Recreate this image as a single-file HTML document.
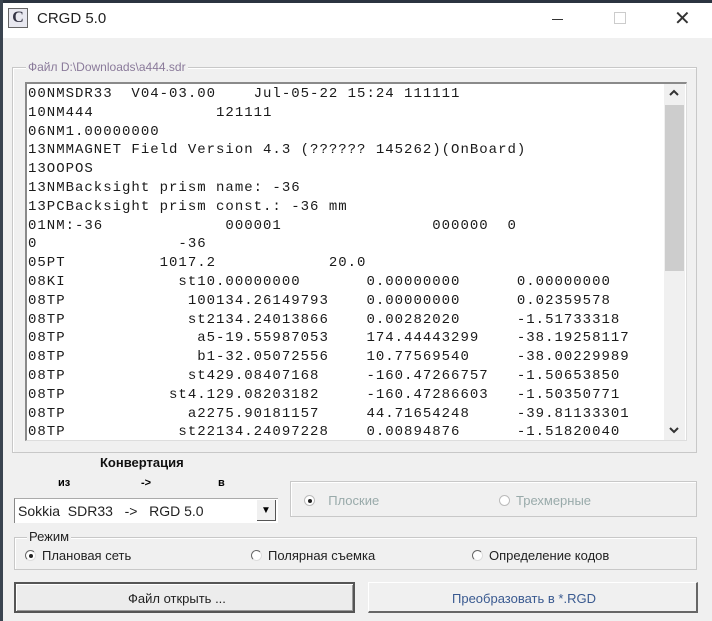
<!DOCTYPE html>
<html><head><meta charset="utf-8"><style>
*{margin:0;padding:0;box-sizing:border-box}
body{width:712px;height:621px;overflow:hidden;background:#f0f0f0;font-family:"Liberation Sans","DejaVu Sans",sans-serif;position:relative}
.abs{position:absolute}
.title{left:0;top:0;width:712px;height:38px;background:#fff;border-top:3px solid #2b3440}
.lb{left:0;top:0;width:3px;height:621px;background:#3a4450}
.txt{left:25px;top:82px;width:662px;height:359px;background:#fff;border-top:2px solid #8a8a8a;border-left:2px solid #8a8a8a;border-right:1px solid #ddd;border-bottom:1px solid #ddd;overflow:hidden}
pre{font-family:"Liberation Mono",monospace;font-size:14px;letter-spacing:1.0px;line-height:18.8px;color:#1a1a1a;margin:1px 0 0 1px;font-weight:normal}
.grp{border:1px solid #c8c8c8;box-shadow:inset 1px 1px 0 #fff}
.s{font-size:13px;color:#222}
.dis{color:#9aa;font-size:13px}
.rad{display:inline-block;width:11px;height:11px;border-radius:50%;border:1px solid #777;border-color:#666 #ddd #ddd #666;background:#fff;vertical-align:-1px;margin-right:6px;position:relative}
.rad.on::after{content:"";position:absolute;left:3px;top:3px;width:4px;height:4px;border-radius:50%;background:#222}
</style></head><body>
<div class="abs title"></div>
<div class="abs lb"></div>
<div class="abs" style="left:8px;top:8px;width:20px;height:20px;border:1px solid #666;background:#e8e8f0;font:bold 16px 'Liberation Serif';text-align:center;line-height:18px;color:#334">C</div>
<div class="abs" style="left:37px;top:10px;font-size:15px;color:#222">CRGD 5.0</div>
<div class="abs" style="left:552px;top:19px;width:11px;height:1px;background:#333"></div>
<div class="abs" style="left:614px;top:12px;width:12px;height:12px;border:1px solid #ccc"></div>
<div class="abs" style="left:674px;top:6px;font-size:20px;color:#333">✕</div>

<div class="abs grp" style="left:12px;top:67px;width:685px;height:386px"></div>
<div class="abs" style="left:26px;top:60px;background:#f0f0f0;padding:0 2px;font-size:12px;color:#8a7a9a">Файл D:\Downloads\a444.sdr</div>
<div class="abs txt"><pre>00NMSDR33  V04-03.00    Jul-05-22 15:24 111111
10NM444             121111
06NM1.00000000
13NMMAGNET Field Version 4.3 (?????? 145262)(OnBoard)
13OOPOS
13NMBacksight prism name: -36
13PCBacksight prism const.: -36 mm
01NM:-36             000001                000000  0
0               -36
05PT          1017.2            20.0
08KI            st10.00000000       0.00000000      0.00000000
08TP             100134.26149793    0.00000000      0.02359578
08TP             st2134.24013866    0.00282020      -1.51733318
08TP              a5-19.55987053    174.44443299    -38.19258117
08TP              b1-32.05072556    10.77569540     -38.00229989
08TP             st429.08407168     -160.47266757   -1.50653850
08TP           st4.129.08203182     -160.47286603   -1.50350771
08TP             a2275.90181157     44.71654248     -39.81133301
08TP            st22134.24097228    0.00894876      -1.51820040</pre></div>
<div class="abs" style="left:664px;top:84px;width:21px;height:356px;background:#f0f0f0"></div>
<svg class="abs" style="left:668px;top:89px" width="12" height="8"><path d="M2 6 L6 2 L10 6" stroke="#333" stroke-width="2" fill="none"/></svg>
<div class="abs" style="left:665px;top:105px;width:19px;height:166px;background:#cdcdcd"></div>
<svg class="abs" style="left:668px;top:426px" width="12" height="8"><path d="M2 2 L6 6 L10 2" stroke="#333" stroke-width="2" fill="none"/></svg>

<div class="abs" style="left:100px;top:455px;font-size:13px;font-weight:bold;color:#111">Конвертация</div>
<div class="abs" style="left:58px;top:477px;font-size:11px;font-weight:bold">из</div>
<div class="abs" style="left:141px;top:477px;font-size:11px;font-weight:bold">-&gt;</div>
<div class="abs" style="left:218px;top:477px;font-size:11px;font-weight:bold">в</div>
<div class="abs" style="left:14px;top:498px;width:264px;height:25px;background:#fff;border-left:1px solid #888;border-top:1px solid #aaa"></div>
<div class="abs s" style="left:18px;top:503px;font-size:14px">Sokkia&nbsp; SDR33 &nbsp; -&gt; &nbsp; RGD 5.0</div>
<div class="abs" style="left:257px;top:500px;width:19px;height:21px;background:#f0f0f0;border-right:1px solid #555;border-bottom:1px solid #555;font-size:10px;text-align:center;line-height:21px">▼</div>
<div class="abs grp" style="left:290px;top:481px;width:407px;height:36px"></div>
<div class="abs dis" style="left:304px;top:493px"><span class="rad on" style="border-color:#bbb"></span>&nbsp; Плоские</div>
<div class="abs dis" style="left:499px;top:493px"><span class="rad" style="border-color:#bbb"></span>Трехмерные</div>

<div class="abs grp" style="left:14px;top:537px;width:683px;height:33px"></div>
<div class="abs s" style="left:27px;top:529px;background:#f0f0f0;padding:0 2px">Режим</div>
<div class="abs s" style="left:25px;top:548px"><span class="rad on"></span>Плановая сеть</div>
<div class="abs s" style="left:251px;top:548px"><span class="rad"></span>Полярная съемка</div>
<div class="abs s" style="left:472px;top:548px"><span class="rad"></span>Определение кодов</div>

<div class="abs" style="left:14px;top:582px;width:341px;height:31px;border:2px solid #555;background:#ececec;box-shadow:inset 1px 1px 0 #fff,inset -1px -1px 0 #999"></div>
<div class="abs s" style="left:128px;top:591px">Файл открыть ...</div>
<div class="abs" style="left:368px;top:582px;width:330px;height:31px;border-top:1px solid #fff;border-left:1px solid #fff;border-right:2px solid #666;border-bottom:2px solid #666;background:#f0f0f0"></div>
<div class="abs" style="left:452px;top:591px;font-size:13px;color:#3a5a90">Преобразовать в *.RGD</div>
</body></html>
